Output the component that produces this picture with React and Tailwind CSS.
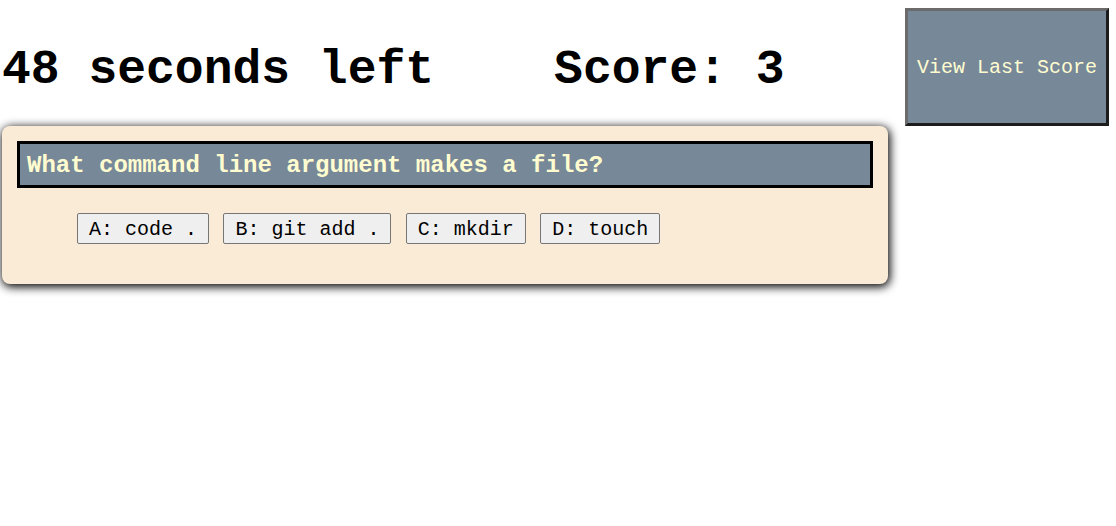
import React from "react";

const answers = ["A: code .", "B: git add .", "C: mkdir", "D: touch"];

const mono =
  "font-['Courier_New','Nimbus_Mono_PS','FreeMono','Liberation_Mono',monospace]";

const App = () => {
  return (
    <div className={`flex items-start bg-white min-h-[526px] ${mono}`}>
      <div className="pl-[2px] w-[905px]">
        <div className="flex pt-[43px] pb-[29px] text-[48px] leading-[54px] font-bold text-black">
          <h1>48 seconds left</h1>
          <h1 className="ml-[120px]">Score: 3</h1>
        </div>
        <div className="w-[886px] rounded-lg bg-[#faebd7] shadow-[1px_2px_10px_1px_#000] px-[15px] pt-[15px] pb-[40px]">
          <div className="border-[3px] border-black bg-[#778899] px-[7px] pt-[8px] pb-[6px] text-[24px] leading-[27px] font-bold text-[#fffdd0]">
            What command line argument makes a file?
          </div>
          <div className="flex gap-[14.4px] pl-[60px] mt-[25px]">
            {answers.map((a) => (
              <button
                key={a}
                className="border border-[#767676] rounded-[2px] bg-[#efefef] px-[11px] pt-[4px] pb-[2px] text-[20px] leading-[23px] text-black whitespace-pre"
              >
                {a}
              </button>
            ))}
          </div>
        </div>
      </div>
      <button className="mt-[8px] w-[204px] h-[118px] border-[3px] border-t-[#6b6b6b] border-l-[#6b6b6b] border-r-[#1c1c1c] border-b-[#1c1c1c] bg-[#778899] pt-[2px] text-[20px] text-[#fffdd0]">
        View Last Score
      </button>
    </div>
  );
};

export default App;
